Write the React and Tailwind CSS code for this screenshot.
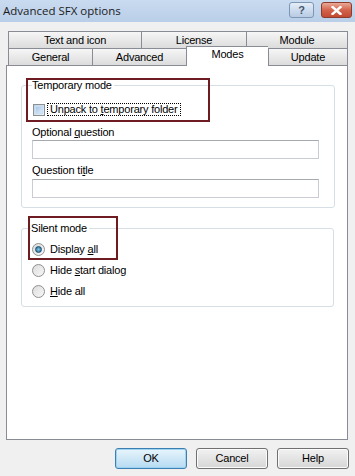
import React from 'react';

const font = { fontFamily: '"Liberation Sans", Arial, sans-serif' };

function Tab({ label, width, last }) {
  return (
    <div
      className={`h-[17px] flex items-center justify-center border-t border-l border-[#898c95] bg-linear-to-b from-[#f6f6f6] to-[#dcdcdc] text-[11px] text-black ${last ? 'border-r' : ''}`}
      style={{ width }}
    >
      {label}
    </div>
  );
}

function Radio({ checked, children }) {
  return (
    <div className="flex items-center h-[13px] gap-[5px]">
      <div className="w-[13px] h-[13px] rounded-full border border-[#8e8f8f] bg-linear-to-br from-[#dcdcdc] to-[#f8f8f8] flex items-center justify-center">
        {checked && (
          <div className="w-[7px] h-[7px] rounded-full bg-radial from-[#7fc6e8] to-[#1d5e86] border border-[#1b4f73]" />
        )}
      </div>
      <span className="leading-[13px]">{children}</span>
    </div>
  );
}

function TextInput() {
  return (
    <div className="w-[287px] h-[19px] border border-[#c9ccd2] border-t-[#a6a9b0] bg-white" />
  );
}

export default function App() {
  return (
    <div className="w-[355px] h-[476px] bg-[#f0f0f0] flex flex-col text-[11px] tracking-[-0.2px] text-black overflow-hidden" style={font}>
      {/* title bar */}
      <div className="h-[22px] flex items-center justify-between pl-[3px] pr-[3px] bg-linear-to-b from-[#c9dbf0] to-[#b9cee8]">
        <span className="text-[11.5px] tracking-normal text-[#1b1b1b] -mt-[1px]" style={{ fontFamily: '"Open Sans", "Liberation Sans", sans-serif' }}>
          Advanced SFX options
        </span>
        <div className="flex items-start gap-[7px] self-start mt-[2px]">
          <div className="w-[25px] h-[16px] rounded-[3px] border border-[#7f96b3] bg-linear-to-b from-[#e4edf8] to-[#b7cbe4] flex items-center justify-center text-[11px] font-bold text-[#46566b] leading-none">
            ?
          </div>
          <div className="w-[31px] h-[16px] rounded-[3px] border border-[#8c3b2c] bg-linear-to-b from-[#e9a897] via-[#d3634c] to-[#c24a33] flex items-center justify-center">
            <svg width="11" height="9" viewBox="0 0 11 9">
              <path d="M1.5 1 L9.5 8 M9.5 1 L1.5 8" stroke="#ffffff" strokeWidth="2.4" strokeLinecap="square" />
            </svg>
          </div>
        </div>
      </div>

      {/* tabs */}
      <div className="mt-[9px] ml-[8px] flex">
        <Tab label="Text and icon" width={133} />
        <Tab label="License" width={105} />
        <Tab label="Module" width={102} last />
      </div>
      <div className="ml-[8px] flex items-end h-[17px]">
        <Tab label="General" width={84} />
        <Tab label="Advanced" width={94} />
        <div className="relative z-10 w-[82px] h-[20px] -mb-[1px] bg-white border-t border-l border-[#898c95] flex justify-center pt-[1px] text-[11px] leading-[13px]">
          Modes
        </div>
        <Tab label="Update" width={80} last />
      </div>

      {/* panel */}
      <div className="relative ml-[6px] w-[342px] h-[375px] border border-[#898c95] bg-white pl-[14px] pt-[13px]">
        <fieldset className="w-[313px] border border-[#d5dfe5] rounded-[3px] pl-[10px] pr-[15px] pb-[9px]">
          <legend className="leading-[13px] pr-[2px]">Temporary mode</legend>
          <div className="mt-[11px] flex items-center h-[13px]">
            <div className="ml-[1px] w-[12px] h-[12px] border border-[#8e8f8f] bg-linear-to-br from-[#b9d3ee] to-[#e8f1fb] p-[1px]">
              <div className="w-full h-full border border-[#c9dcf0] bg-linear-to-br from-[#a9c6e6] to-[#dceafa]" />
            </div>
            <span className="ml-[2px] px-[2px] border border-dotted border-black leading-[11px]">
              Unpack to <span className="underline">t</span>emporary folder
            </span>
          </div>
          <div className="mt-[10px] leading-[13px]">
            Optional <span className="underline">q</span>uestion
          </div>
          <div className="mt-[1px]">
            <TextInput />
          </div>
          <div className="mt-[5px] leading-[13px]">
            Question ti<span className="underline">t</span>le
          </div>
          <div className="mt-[2px]">
            <TextInput />
          </div>
        </fieldset>

        <fieldset className="mt-[14px] w-[313px] border border-[#d5dfe5] rounded-[3px] pl-[10px] pr-[15px] pb-[8px]">
          <legend className="leading-[13px] pr-[2px] -ml-[1px]">Silent mode</legend>
          <div className="mt-[8px] flex flex-col gap-[8px]">
            <Radio checked>
              Display <span className="underline">a</span>ll
            </Radio>
            <Radio>
              Hide <span className="underline">s</span>tart dialog
            </Radio>
            <Radio>
              <span className="underline">H</span>ide all
            </Radio>
          </div>
        </fieldset>

        {/* highlight boxes */}
        <div className="absolute left-[19px] top-[12px] w-[184px] h-[44px] border-2 border-[#6e1b22] pointer-events-none" />
        <div className="absolute left-[21px] top-[150px] w-[90px] h-[44px] border-2 border-[#6e1b22] pointer-events-none" />
      </div>

      {/* buttons */}
      <div className="mt-[8px] flex justify-end gap-[9px] pr-[6px]">
        <div className="w-[72px] h-[21px] rounded-[3px] border border-[#3c7fb1] bg-linear-to-b from-[#e8f5fc] to-[#b6dbf2] flex items-center justify-center shadow-[inset_0_0_0_1px_#9fd3f2]">
          OK
        </div>
        <div className="w-[72px] h-[21px] rounded-[3px] border border-[#707070] bg-linear-to-b from-[#f2f2f2] to-[#d6d6d6] flex items-center justify-center shadow-[inset_0_0_0_1px_#fbfbfb]">
          Cancel
        </div>
        <div className="w-[72px] h-[21px] rounded-[3px] border border-[#707070] bg-linear-to-b from-[#f2f2f2] to-[#d6d6d6] flex items-center justify-center shadow-[inset_0_0_0_1px_#fbfbfb]">
          Help
        </div>
      </div>
    </div>
  );
}
